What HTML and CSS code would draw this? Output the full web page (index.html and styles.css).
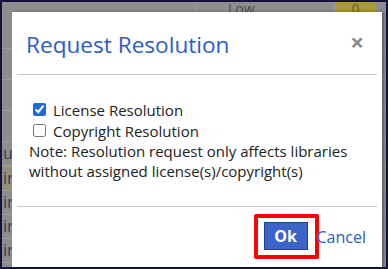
FILE: index.html
```html
<!DOCTYPE html>
<html lang="en">
<head>
    <meta charset="UTF-8">
    <meta name="viewport" content="width=device-width, initial-scale=1.0">
    <title>Request Resolution</title>
    <link rel="stylesheet" href="styles.css">
</head>
<body>
    <div class="frame">
        <!-- dimmed page behind the dialog -->
        <div class="page">
            <div class="page-row top-row">
                <div class="cell cell-a"></div>
                <div class="cell cell-b">Low</div>
                <div class="cell cell-c">0</div>
            </div>
            <div class="page-row r-tall"><div class="cell edge"></div></div>
            <div class="page-row r-mid"><div class="cell edge"></div></div>
            <div class="page-row r-mid"><div class="cell edge"></div></div>
            <div class="page-row r-mid"><div class="cell edge"></div></div>
            <div class="page-row"><div class="cell edge">us</div></div>
            <div class="page-row tint"><div class="cell edge">ir</div></div>
            <div class="page-row"><div class="cell edge">ir</div></div>
            <div class="page-row"><div class="cell edge">ir</div></div>
            <div class="page-row"><div class="cell edge">ir</div></div>
        </div>

        <div class="modal">
            <div class="modal-header">
                <h1 class="modal-title">Request Resolution</h1>
                <span class="close">&times;</span>
            </div>
            <div class="modal-body">
                <label class="option"><input type="checkbox" checked> License Resolution</label>
                <label class="option"><input type="checkbox"> Copyright Resolution</label>
                <p class="note">Note: Resolution request only affects libraries without assigned license(s)/copyright(s)</p>
            </div>
            <div class="modal-footer">
                <span class="highlight"><button class="btn-ok">Ok</button></span>
                <a class="cancel" href="#">Cancel</a>
            </div>
        </div>
    </div>
</body>
</html>
```

FILE: styles.css
```css
html, body {
    margin: 0;
    padding: 0;
}
body {
    font-family: "Open Sans", sans-serif;
    color: #222;
}
.frame {
    position: relative;
    width: 388px;
    height: 269px;
    box-sizing: border-box;
    border: 2px solid #12123c;
    background-color: #8d8d8d;
    overflow: hidden;
}
.page {
    display: flex;
    flex-direction: column;
}
.page-row {
    display: flex;
    flex-shrink: 0;
    height: 23px;
    border-bottom: 1px solid #9c9c9c;
}
.top-row {
    height: 12px;
    border-bottom: none;
}
.r-tall { height: 34px; }
.r-mid { height: 30px; }
.cell {
    font-size: 14px;
    line-height: 14px;
    color: #4a4a4a;
    box-sizing: border-box;
}
.cell-a {
    width: 194px;
    border-right: 1px solid #9c9c9c;
}
.cell-b {
    width: 139px;
    padding-left: 32px;
    border-right: 1px solid #9c9c9c;
}
.cell-c {
    width: 41px;
    background-color: #a89a2e;
    text-align: center;
    color: #6a6320;
}
.edge {
    width: 10px;
    padding-left: 1px;
    font-size: 16px;
    line-height: 23px;
    color: #3b3b55;
    overflow: hidden;
    white-space: nowrap;
}
.tint {
    background-color: #938f7c;
    border-top: 1px solid #a39a63;
}
.modal {
    position: absolute;
    left: 10px;
    top: 10px;
    width: 370px;
    height: 260px;
    padding: 0 5px;
    box-sizing: border-box;
    background-color: #fff;
    box-shadow: 2px 0 3px rgba(0, 0, 0, 0.35);
}
.modal-header {
    display: flex;
    align-items: center;
    justify-content: space-between;
    height: 62px;
    padding: 0 13px 0 9px;
    border-bottom: 1px solid #c8c8c8;
}
.modal-title {
    margin: 2px 0 0;
    font-size: 22.6px;
    font-weight: normal;
    color: #2b5ccf;
}
.close {
    font-size: 24px;
    font-weight: bold;
    color: #8a8a8a;
    margin-top: -4px;
}
.modal-body {
    padding: 24px 12px 25px;
    font-size: 15px;
    line-height: 20px;
    border-bottom: 1px solid #c8c8c8;
}
.option {
    display: flex;
    align-items: center;
    gap: 7px;
    padding-left: 4px;
    height: 21px;
}
.option input {
    margin: 0;
    width: 13px;
    height: 13px;
    accent-color: #1a6be0;
}
.note {
    margin: 0;
}
.modal-footer {
    display: flex;
    justify-content: flex-end;
    align-items: center;
    padding: 7px 11px 0 0;
}
.highlight {
    display: flex;
    margin-right: -2px;
    padding: 4px 7px 5px 6px;
    border: 4px solid #f00;
    border-radius: 2px;
}
.btn-ok {
    width: 44px;
    height: 28px;
    background-color: #3c63c6;
    border: 1px solid #1f3f8f;
    color: #fff;
    font-family: "Open Sans", sans-serif;
    font-weight: bold;
    font-size: 16px;
    padding: 0;
}
.cancel {
    position: relative;
    color: #2b5ccf;
    font-size: 16px;
    text-decoration: none;
}
```
